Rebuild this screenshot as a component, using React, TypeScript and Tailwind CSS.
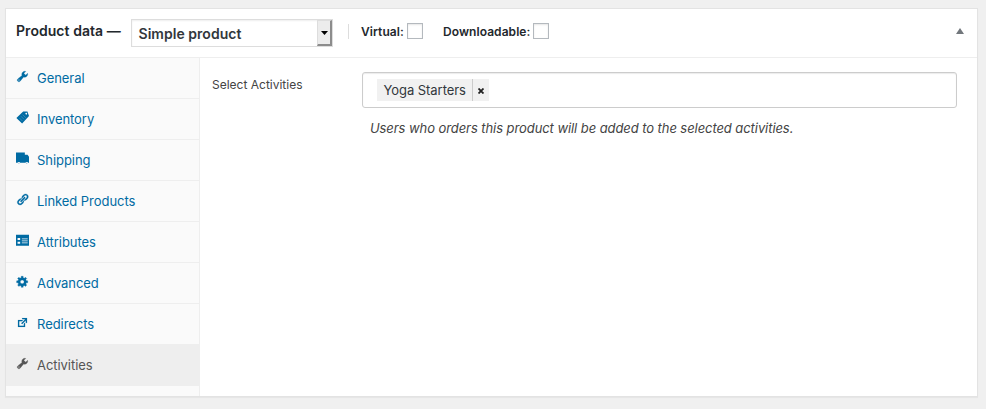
import type { ReactNode } from "react";

const Icon = ({ children }: { children: ReactNode }) => (
  <svg viewBox="0 0 20 20" className="mt-3 h-[13px] w-[13px] shrink-0 overflow-visible fill-current" fillRule="evenodd">
    {children}
  </svg>
);

const wrench = (
  <path stroke="currentColor" strokeWidth=".5" d="M16.68 9.77c-1.34 1.34-3.3 1.67-4.95.99l-5.41 6.52c-.99.99-2.59.99-3.58 0s-.99-2.59 0-3.57l6.52-5.42c-.68-1.65-.35-3.61.99-4.95 1.28-1.28 3.12-1.62 4.72-1.06l-2.89 2.89 2.82 2.82 2.86-2.87c.53 1.58.18 3.39-1.08 4.65zM3.81 16.21c.4.39 1.04.39 1.43 0 .4-.4.4-1.04 0-1.43-.39-.4-1.03-.4-1.43 0-.39.39-.39 1.03 0 1.43z" />
);
const tag = (
  <>
    <path d="M11 .8L17.6.6 20 7.6 9.4 19.2.6 10.6zM15.8 2.8a1.3 1.3 0 1 0 .01 0z" />
    <path d="M10 5.5l5 5M7.5 8l5 5M5 10.5l5 5" stroke="#fafafa" strokeOpacity=".4" strokeWidth=".8" fill="none" />
  </>
);
const truck = (
  <path d="M0 .6h13.6v3.6h4.2L20 7.4v9h-1.4l-.9-.9h-2.2l-.9.9H6.4l-.9-.9H3.3l-.9.9H0zM3.9 16.4h1.2v1.2H3.9zM16 16.4h1.2v1.2H16z" />
);
const link = (
  <path stroke="currentColor" strokeWidth=".4" d="M17.74 2.76c1.68 1.69 1.68 4.41 0 6.1l-1.53 1.52c-1.12 1.12-2.7 1.47-4.14 1.09l2.62-2.61.76-.77.76-.76c.84-.84.84-2.2 0-3.04-.84-.85-2.2-.85-3.04 0l-.77.76-3.38 3.38c-.37-1.44-.02-3.02 1.1-4.14l1.52-1.53c1.69-1.68 4.42-1.68 6.1 0zM8.59 13.43l5.34-5.34c.42-.42.42-1.1 0-1.52-.44-.43-1.13-.39-1.53 0l-5.33 5.34c-.42.42-.42 1.1 0 1.52.44.43 1.13.39 1.52 0zm-.76 2.29l4.14-4.15c.38 1.44.03 3.02-1.09 4.14l-1.52 1.53c-1.69 1.68-4.41 1.68-6.1 0-1.68-1.68-1.68-4.42 0-6.1l1.53-1.52c1.12-1.12 2.7-1.47 4.14-1.1l-4.14 4.15c-.85.84-.85 2.2 0 3.05.84.84 2.2.84 3.04 0z" />
);
const list = (
  <path d="M0 1h20v17H0zM2.4 6.2h4v3.2h-4zM9 6.8h9v1.2H9zM9 10h9v1.2H9zM2.4 12h4v3h-4zM9 13.2h9v1.2H9z" />
);
const gear = (
  <path stroke="currentColor" strokeWidth=".5" d="M18 12h-2.18c-.17.7-.44 1.35-.81 1.93l1.54 1.54-2.1 2.1-1.54-1.54c-.58.36-1.23.63-1.91.79V19H8v-2.18c-.68-.16-1.33-.43-1.91-.79l-1.54 1.54-2.12-2.12 1.54-1.54c-.36-.58-.63-1.23-.79-1.91H1V9.03h2.17c.16-.7.44-1.35.8-1.94L2.43 5.55l2.1-2.1 1.54 1.54c.58-.37 1.24-.64 1.93-.81V2h3v2.18c.68.16 1.33.43 1.91.79l1.54-1.54 2.12 2.12-1.54 1.54c.36.59.64 1.24.8 1.94H18V12zm-8.5 1.5c1.66 0 3-1.34 3-3s-1.34-3-3-3-3 1.34-3 3 1.34 3 3 3z" />
);
const external = (
  <path stroke="currentColor" strokeWidth=".15" d="M9 3h8v8l-2-1V6.92l-5.6 5.59-1.41-1.41L14.08 5H10zm3 12v-3l2-2v7H3V6h8L9 8H5v7h7z" />
);

const tabs: { label: string; icon: ReactNode; active?: boolean }[] = [
  { label: "General", icon: wrench },
  { label: "Inventory", icon: tag },
  { label: "Shipping", icon: truck },
  { label: "Linked Products", icon: link },
  { label: "Attributes", icon: list },
  { label: "Advanced", icon: gear },
  { label: "Redirects", icon: external },
  { label: "Activities", icon: wrench, active: true },
];

const Checkbox = () => (
  <span className="h-4 w-4 border border-[#b4b9be] bg-white shadow-[inset_0_1px_2px_rgba(0,0,0,0.1)]" />
);

export default function App() {
  return (
    <div className="h-[409px] w-[986px] bg-[#f0f0f0] pt-2 pl-[5px] font-['Inter',sans-serif] text-[13px] text-[#444]">
      <div className="flex h-[389px] w-[973px] flex-col border border-[#e3e3e3] bg-white shadow-[0_1px_1px_rgba(0,0,0,0.04)]">
        <header className="flex h-[49px] shrink-0 items-start border-b border-[#eee] text-[#23282d]">
          <h2 className="mt-[12px] ml-[10px] w-[115px] text-[14px] leading-5 font-semibold tracking-[0.05px] whitespace-nowrap">Product data —</h2>
          <div className="mt-[10px] flex h-[28px] w-[202px] border border-[#ddd] bg-white shadow-[inset_0_1px_2px_rgba(0,0,0,0.07)]">
            <span className="grow pl-[6.5px] text-[14px] leading-[28px] font-semibold tracking-[0.03px] text-[#32373c]">Simple product</span>
            <span className="flex w-[15px] items-center justify-center border-t border-r-2 border-b-2 border-l border-t-[#ddd] border-r-[#8c8c8c] border-b-[#8c8c8c] border-l-[#ddd] bg-[#ececec]">
              <svg viewBox="0 0 7 4" className="h-1 w-[7px] fill-black"><path d="M0 0h7L3.5 4z" /></svg>
            </span>
          </div>
          <span className="mt-[15px] ml-[15px] h-[15px] w-px bg-[#ddd]" />
          <label className="mt-[14px] ml-3 flex h-4 items-center text-[12px] leading-4 font-semibold">
            <span className="w-[46px] pt-px tracking-[0.08px] whitespace-nowrap">Virtual:</span>
            <Checkbox />
          </label>
          <label className="mt-[14px] ml-5 flex h-4 items-center text-[12px] leading-4 font-semibold">
            <span className="w-[90px] pt-px tracking-[0.06px] whitespace-nowrap">Downloadable:</span>
            <Checkbox />
          </label>
          <svg viewBox="0 0 8 6" className="mt-[19px] mr-[13.5px] ml-auto h-[6px] w-2 fill-[#72777c]"><path d="M4 0l4 6H0z" /></svg>
        </header>
        <div className="flex min-h-0 grow">
          <nav className="w-[194px] shrink-0 border-r border-[#eee] bg-[#fafafa]">
            {tabs.map((t) => (
              <a
                key={t.label}
                className={
                  t.active
                    ? "flex h-[41px] items-start border-b border-[#eee] bg-[#eee] pl-[10px] text-[#555]"
                    : "flex h-[41px] items-start border-b border-[#eee] pl-[10px] text-[#006ba3]"
                }
              >
                <Icon>{t.icon}</Icon>
                <span className="ml-2 leading-[41px] tracking-[-0.05px]">{t.label}</span>
              </a>
            ))}
          </nav>
          <main className="flex grow items-start">
            <label className="mt-[17px] ml-3 w-[150px] text-[12px] leading-5">Select Activities</label>
            <div className="mt-[14px]">
              <div className="flex h-[36px] w-[595px] items-start rounded-[3px] border border-[#ccc] bg-white pt-[6px] pl-[14px] shadow-[inset_0_1px_1px_rgba(0,0,0,0.08)]">
                <span className="flex h-[22px] w-[112px] bg-[#f1f1f1] leading-[22px] text-[#32373c]">
                  <span className="w-[96px] border-r border-[#ccc] pl-[6.5px] tracking-[-0.05px] whitespace-nowrap">Yoga Starters</span>
                  <span className="flex grow items-center justify-center">
                    <svg viewBox="0 0 6 6" className="mt-[2px] h-[6px] w-[6px] stroke-[#222]" strokeWidth="1.8"><path d="M.5.5l5 5M5.5.5l-5 5" /></svg>
                  </span>
                </span>
              </div>
              <p className="mt-[10px] ml-2 leading-5 tracking-[-0.075px] whitespace-nowrap italic">
                Users who orders this product will be added to the selected activities.
              </p>
            </div>
          </main>
        </div>
      </div>
    </div>
  );
}
